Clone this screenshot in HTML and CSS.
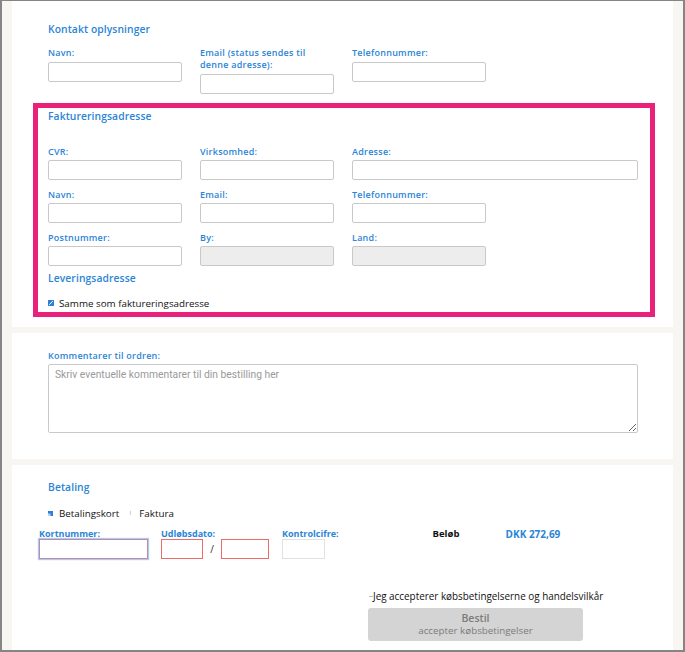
FILE: index.html
```html
<!DOCTYPE html>
<html lang="da">
<head>
<meta charset="utf-8">
<title>Bestilling</title>
<link rel="stylesheet" href="styles.css">
</head>
<body>
<div class="frame">
  <section class="card card-contact">
    <h2 class="title">Kontakt oplysninger</h2>
    <div class="grid grid-contact">
      <div class="field"><label class="lbl">Navn:</label><input class="inp" type="text"></div>
      <div class="field"><label class="lbl">Email (status sendes til<br>denne adresse):</label><input class="inp" type="text"></div>
      <div class="field"><label class="lbl">Telefonnummer:</label><input class="inp inp-narrow" type="text"></div>
    </div>
    <div class="billing">
      <h2 class="title">Faktureringsadresse</h2>
      <div class="grid grid-billing">
        <div class="field"><label class="lbl">CVR:</label><input class="inp" type="text"></div>
        <div class="field"><label class="lbl">Virksomhed:</label><input class="inp" type="text"></div>
        <div class="field"><label class="lbl">Adresse:</label><input class="inp" type="text"></div>
        <div class="field"><label class="lbl">Navn:</label><input class="inp" type="text"></div>
        <div class="field"><label class="lbl">Email:</label><input class="inp" type="text"></div>
        <div class="field"><label class="lbl">Telefonnummer:</label><input class="inp inp-narrow" type="text"></div>
        <div class="field"><label class="lbl">Postnummer:</label><input class="inp" type="text"></div>
        <div class="field"><label class="lbl">By:</label><input class="inp inp-disabled" type="text" disabled></div>
        <div class="field"><label class="lbl">Land:</label><input class="inp inp-narrow inp-disabled" type="text" disabled></div>
      </div>
      <h2 class="title title-lev">Leveringsadresse</h2>
      <div class="check">
        <svg class="cbox" width="6" height="6" viewBox="0 0 6 6"><rect width="6" height="6" fill="#2f7fd6"/><path d="M1.2 4.8 L4.8 1.2" stroke="#fff" stroke-width="1"/></svg>
        <span>Samme som faktureringsadresse</span>
      </div>
    </div>
  </section>

  <section class="card card-comment">
    <label class="lbl">Kommentarer til ordren:</label>
    <textarea class="area" placeholder="Skriv eventuelle kommentarer til din bestilling her"></textarea>
  </section>

  <section class="card card-pay">
    <h2 class="title">Betaling</h2>
    <div class="radios">
      <svg class="radio" width="5" height="5" viewBox="0 0 5 5"><rect width="5" height="5" fill="#2f7fd6"/><rect x="0" y="2.5" width="2.5" height="2.5" fill="#b9d4f2"/></svg>
      <span class="opt">Betalingskort</span>
      <span class="radio-off"></span>
      <span class="opt">Faktura</span>
    </div>
    <div class="payrow">
      <div class="pf">
        <label class="plbl">Kortnummer:</label>
        <input class="pinp pinp-card" type="text">
      </div>
      <div class="pf">
        <label class="plbl">Udløbsdato:</label>
        <div class="exp">
          <input class="pinp pinp-err pinp-m" type="text">
          <span class="slash">/</span>
          <input class="pinp pinp-err pinp-y" type="text">
        </div>
      </div>
      <div class="pf">
        <label class="plbl">Kontrolcifre:</label>
        <input class="pinp pinp-cvc" type="text">
      </div>
      <div class="amount">
        <span class="amt-lbl">Beløb</span>
        <span class="amt-val">DKK 272,69</span>
      </div>
    </div>
    <div class="terms">
      <div class="accept"><span class="dash"></span><span>Jeg accepterer købsbetingelserne og handelsvilkår</span></div>
      <button class="order" type="button"><span class="b1">Bestil</span><span class="b2">accepter købsbetingelser</span></button>
    </div>
  </section>
</div>
</body>
</html>
```

FILE: styles.css
```css
* { box-sizing: border-box; }
html, body { margin: 0; padding: 0; }
body {
  font-family: "Open Sans", "Liberation Sans", sans-serif;
  background: #f7f6f2;
}
.frame {
  height: 652px;
  border-left: 2px solid #858585;
  border-right: 2px solid #858585;
  border-top: 1px solid #858585;
  border-bottom: 2px solid #858585;
  background: #f7f6f2;
  padding: 0 10px;
  display: flex;
  flex-direction: column;
  gap: 6px;
  overflow: hidden;
}
.card {
  background: #fff;
  padding-left: 36px;
}
.title {
  margin: 0;
  font-size: 10.3px;
  line-height: 14px;
  font-weight: 600;
  color: #2b85d6;
  letter-spacing: 0.1px;
}
.lbl {
  display: block;
  font-size: 9px;
  line-height: 12px;
  font-weight: 600;
  color: #2b85d6;
  letter-spacing: 0.25px;
}
.grid {
  display: grid;
  grid-template-columns: 134px 134px 286px;
  column-gap: 18px;
  align-items: start;
}
.field .inp { margin-top: 3px; }
.inp {
  display: block;
  width: 100%;
  height: 20px;
  border: 1px solid #c9c9c9;
  border-radius: 2px;
  background: #fff;
  padding: 0 4px;
  font: inherit;
}
.inp-narrow { width: 134px; }
.inp-disabled { background: #ededed; }

/* card 1 */
.card-contact {
  padding-top: 21px;
  padding-bottom: 10px;
}
.grid-contact { margin-top: 11px; }
.billing {
  margin: 9px 18px 0 -15px;
  border: 5px solid #e9217a;
  padding: 1px 10px 3px 10px;
}
.grid-billing {
  margin-top: 23px;
  row-gap: 9px;
}
.grid-billing .field .inp { margin-top: 2px; }
.title-lev { margin-top: 5px; }
.check {
  margin-top: 12px;
  display: flex;
  align-items: center;
  height: 12px;
  font-size: 9.8px;
  color: #111;
}
.cbox { margin-right: 5px; }

/* card 2 */
.card-comment {
  padding-top: 17px;
  padding-bottom: 26px;
}
.area {
  display: block;
  margin-top: 2px;
  width: 590px;
  height: 69px;
  border: 1px solid #c9c9c9;
  border-radius: 2px;
  padding: 3px 6px;
  resize: vertical;
  font-family: "Roboto", "Open Sans", sans-serif;
  font-size: 10.3px;
}
.area::placeholder { color: #9a9a9a; }

/* card 3 */
.card-pay {
  flex: 1;
  padding-top: 15px;
}
.radios {
  margin-top: 13px;
  display: flex;
  align-items: center;
  height: 12px;
  font-size: 9.8px;
  color: #111;
}
.radio { margin-right: 6px; }
.opt { margin-right: 11px; }
.radio-off {
  width: 1px;
  height: 4px;
  background: #cfcfcf;
  margin-right: 8px;
}
.payrow {
  margin-top: 9px;
  margin-left: -9px;
  display: flex;
  align-items: flex-start;
}
.pf { display: flex; flex-direction: column; margin-right: 13px; }
.plbl {
  font-size: 9px;
  line-height: 11px;
  font-weight: 700;
  color: #2b85d6;
  font-family: "Open Sans", sans-serif;
}
.pinp {
  height: 20px;
  border: 1px solid #ccc;
  background: #fff;
  padding: 0 3px;
  margin: 0;
}
.pinp-card {
  width: 109px;
  border: 1px solid #c488a6;
  box-shadow: 0 0 1px 1px #aacdf1;
}
.pinp-err { border-color: #f16a6a; }
.pinp-m { width: 42px; }
.pinp-y { width: 48px; }
.exp { display: flex; align-items: center; }
.slash {
  width: 18px;
  text-align: center;
  font-size: 10px;
  color: #333;
}
.pinp-cvc {
  width: 43px;
  border: 1px solid #e2e2e2;
}
.amount {
  margin-left: 81px;
  display: flex;
  font-size: 9.5px;
  line-height: 12px;
  font-weight: 700;
  padding-top: 0;
}
.amt-lbl { width: 73px; color: #111; }
.amt-val { color: #2b85d6; font-size: 10px; }
.terms {
  margin-left: 321px;
  margin-top: 31px;
}
.accept {
  display: flex;
  align-items: center;
  height: 12px;
  font-size: 9.9px;
  color: #111;
}
.dash {
  width: 4px;
  height: 1px;
  background: #bbb;
}
.order {
  margin-top: 6px;
  margin-left: -1px;
  width: 215px;
  height: 33px;
  border: 0;
  border-radius: 3px;
  background: #d4d4d4;
  display: flex;
  flex-direction: column;
  align-items: center;
  justify-content: center;
  font-family: "Open Sans", sans-serif;
  color: #7b7b7b;
  padding: 0;
}
.b1 { font-size: 10.5px; line-height: 13px; font-weight: 600; }
.b2 { font-size: 9.8px; line-height: 12px; }
```
